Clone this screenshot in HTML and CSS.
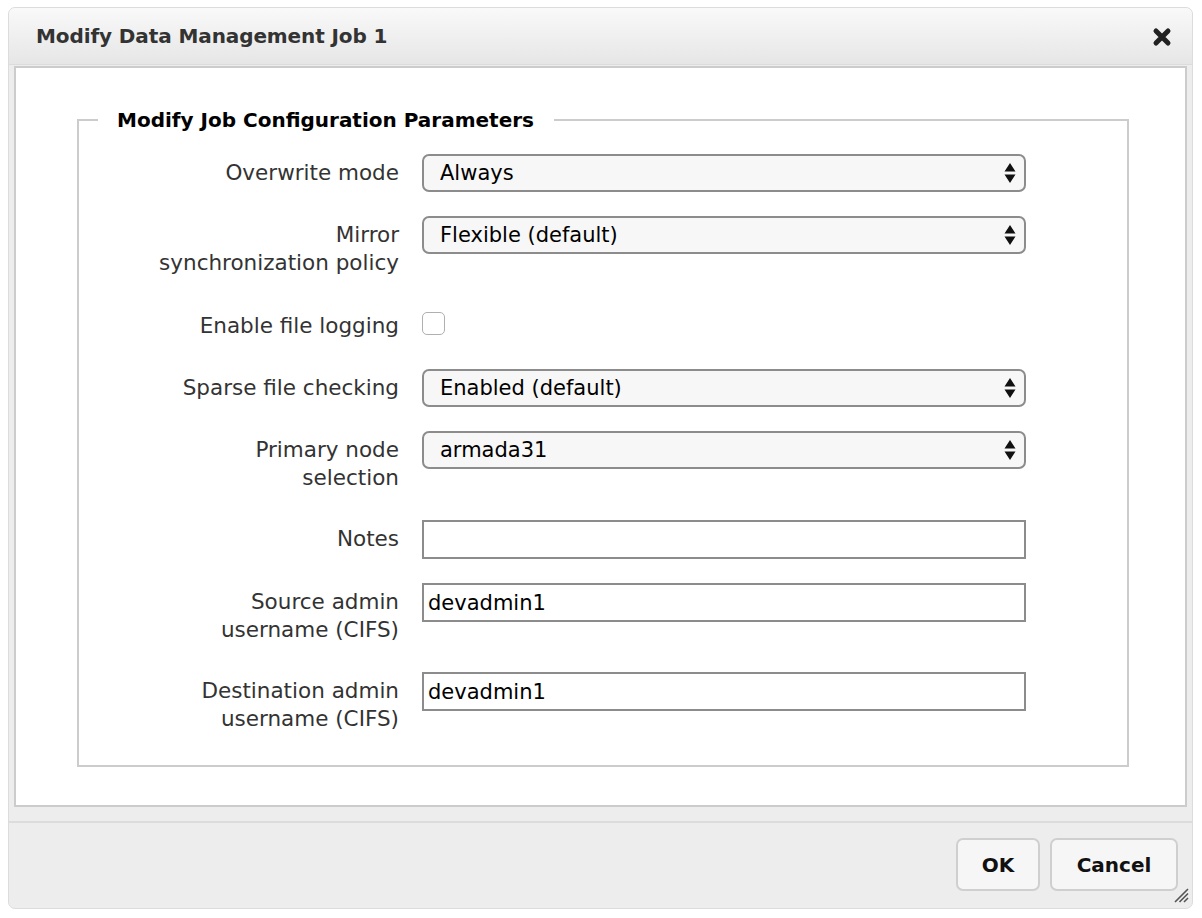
FILE: index.html
```html
<!DOCTYPE html>
<html>
<head>
<meta charset="utf-8">
<link rel="stylesheet" href="styles.css">
</head>
<body>
<div class="dialog">
  <div class="titlebar">
    <span class="title">Modify Data Management Job 1</span>
    <span class="close">
      <svg width="20" height="20" viewBox="0 0 20 20"><path d="M4 4 L16 16 M16 4 L4 16" stroke="#222" stroke-width="5" stroke-linecap="round"/></svg>
    </span>
  </div>
  <div class="content">
    <fieldset class="group">
      <legend>Modify Job Configuration Parameters</legend>
      <div class="row">
        <label class="lbl">Overwrite mode</label>
        <div class="sel"><select><option>Always</option></select><svg class="arr" width="12" height="22" viewBox="0 0 12 22"><path d="M6 1 L11.5 9.5 L0.5 9.5 Z M6 21 L11.5 12.5 L0.5 12.5 Z" fill="#111"/></svg></div>
      </div>
      <div class="row">
        <label class="lbl">Mirror<br>synchronization policy</label>
        <div class="sel"><select><option>Flexible (default)</option></select><svg class="arr" width="12" height="22" viewBox="0 0 12 22"><path d="M6 1 L11.5 9.5 L0.5 9.5 Z M6 21 L11.5 12.5 L0.5 12.5 Z" fill="#111"/></svg></div>
      </div>
      <div class="row row-check">
        <label class="lbl">Enable file logging</label>
        <div class="checkwrap"><span class="check"></span></div>
      </div>
      <div class="row">
        <label class="lbl">Sparse file checking</label>
        <div class="sel"><select><option>Enabled (default)</option></select><svg class="arr" width="12" height="22" viewBox="0 0 12 22"><path d="M6 1 L11.5 9.5 L0.5 9.5 Z M6 21 L11.5 12.5 L0.5 12.5 Z" fill="#111"/></svg></div>
      </div>
      <div class="row">
        <label class="lbl">Primary node<br>selection</label>
        <div class="sel"><select><option>armada31</option></select><svg class="arr" width="12" height="22" viewBox="0 0 12 22"><path d="M6 1 L11.5 9.5 L0.5 9.5 Z M6 21 L11.5 12.5 L0.5 12.5 Z" fill="#111"/></svg></div>
      </div>
      <div class="row">
        <label class="lbl">Notes</label>
        <input class="txt" type="text" value="">
      </div>
      <div class="row">
        <label class="lbl">Source admin<br>username (CIFS)</label>
        <input class="txt" type="text" value="devadmin1">
      </div>
      <div class="row">
        <label class="lbl">Destination admin<br>username (CIFS)</label>
        <input class="txt" type="text" value="devadmin1">
      </div>
    </fieldset>
  </div>
  <div class="footer">
    <button class="btn btn-ok">OK</button>
    <button class="btn btn-cancel">Cancel</button>
    <svg class="grip" width="16" height="16" viewBox="0 0 16 16"><path d="M15 2 L2 15 M15 6.5 L6.5 15 M15 11 L11 15" stroke="#555" stroke-width="1.6"/></svg>
  </div>
</div>
</body>
</html>
```
FILE: styles.css
```css
html, body {
  margin: 0;
  padding: 0;
  background: #fff;
}
body {
  padding: 7px 7px 0 8px;
  font-family: "DejaVu Sans", Verdana, sans-serif;
}
.dialog {
  width: 1185px;
  height: 902px;
  box-sizing: border-box;
  border: 1px solid #dcdcdc;
  border-radius: 7px;
  background: #ededed;
  display: flex;
  flex-direction: column;
  overflow: hidden;
}
.titlebar {
  height: 56px;
  flex: none;
  display: flex;
  align-items: center;
  justify-content: space-between;
  padding: 0 20px 0 27px;
  background: linear-gradient(#f9f9f9, #e6e6e6);
  border-bottom: 1px solid #dcdcdc;
}
.title {
  font-size: 20px;
  font-weight: bold;
  color: #333;
  letter-spacing: -0.1px;
}
.close {
  display: flex;
  margin-top: 2px;
}
.content {
  flex: none;
  margin: 1px 5px 0 5px;
  height: 741px;
  box-sizing: border-box;
  border: 2px solid #cccccc;
  background: #fff;
  padding: 40px 56px 0 61px;
}
.group {
  margin: 0;
  border: 2px solid #cccccc;
  padding: 22px 0 0 0;
  height: 659px;
  box-sizing: border-box;
}
.group legend {
  margin-left: 19px;
  padding: 0 20px 0 19px;
  font-size: 20px;
  font-weight: bold;
  color: #000;
}
.row {
  display: flex;
  align-items: flex-start;
  margin-bottom: 24px;
}
.lbl {
  width: 320px;
  flex: none;
  text-align: right;
  font-size: 21.5px;
  line-height: 28px;
  color: #333;
  padding: 5px 0 4px 0;
}
.sel {
  position: relative;
  margin-left: 23px;
  width: 604px;
}
.sel select {
  appearance: none;
  -webkit-appearance: none;
  width: 100%;
  height: 38px;
  box-sizing: border-box;
  border: 2px solid #8c8c8c;
  border-radius: 7px;
  background: #f7f7f7;
  font-family: "DejaVu Sans", Verdana, sans-serif;
  font-size: 21px;
  color: #000;
  padding: 0 0 0 16px;
  display: block;
}
.sel .arr {
  position: absolute;
  right: 10px;
  top: 8px;
}
.row-check {
  height: 40px;
}
.row-check .lbl {
  padding: 7px 0 0 0;
}
.checkwrap {
  margin-left: 23px;
  padding-top: 7px;
}
.check {
  width: 21px;
  height: 21px;
  border: 1px solid #b0b0b0;
  border-radius: 5px;
  background: #fff;
  display: block;
}
.txt {
  margin-left: 23px;
  width: 604px;
  height: 39px;
  box-sizing: border-box;
  border: 2px solid #8c8c8c;
  background: #fff;
  font-family: "DejaVu Sans", Verdana, sans-serif;
  font-size: 21px;
  color: #000;
  padding: 0 0 0 4px;
  display: block;
}
.footer {
  flex: 1;
  margin-top: 14px;
  border-top: 2px solid #dcdcdc;
  display: flex;
  justify-content: flex-end;
  align-items: flex-start;
  padding: 15px 14px 0 0;
  gap: 10px;
  position: relative;
}
.btn {
  height: 53px;
  box-sizing: border-box;
  border: 2px solid #cfcfcf;
  border-radius: 7px;
  background: #f6f6f6;
  font-family: "DejaVu Sans", Verdana, sans-serif;
  font-size: 20px;
  font-weight: bold;
  color: #111;
}
.btn-ok {
  width: 84px;
}
.btn-cancel {
  width: 128px;
}
.grip {
  position: absolute;
  right: 3px;
  bottom: 5px;
}
```
